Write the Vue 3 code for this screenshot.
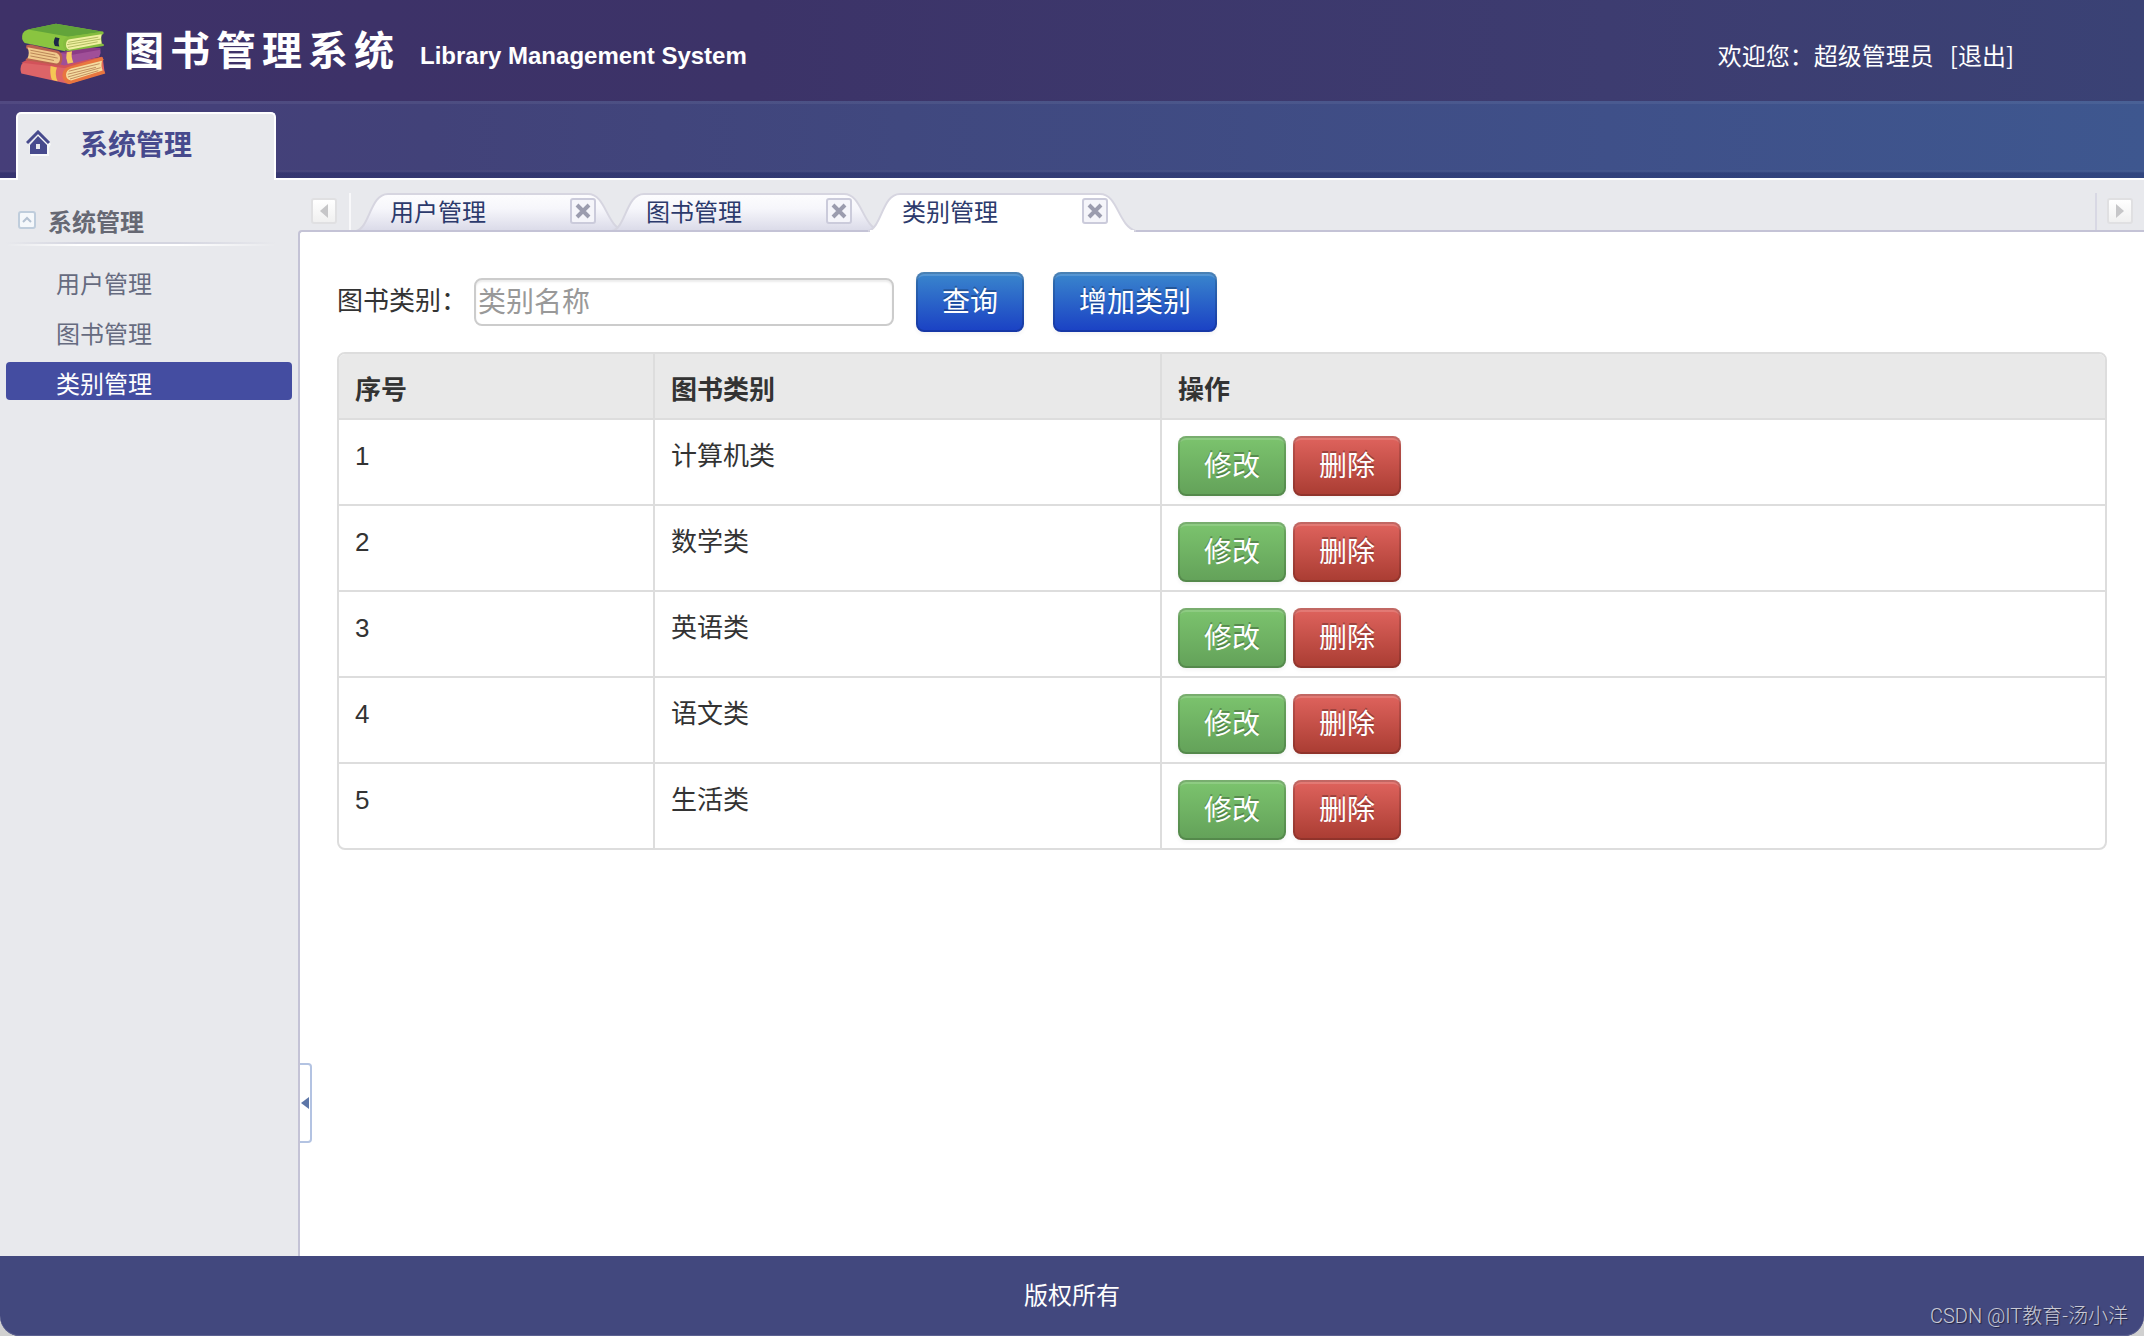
<script setup>
import { ref } from 'vue'

const keyword = ref('')
const menu = ['用户管理', '图书管理', '类别管理']
const tabs = ['用户管理', '图书管理', '类别管理']
const active = ref('类别管理')
const categories = ['计算机类', '数学类', '英语类', '语文类', '生活类']
</script>

<template>
  <div class="page">
    <header class="banner">
      <svg class="logo" viewBox="60 70 256 184" aria-hidden="true">
        <g stroke-linejoin="round" stroke-linecap="round">
          <path d="M78 184 L66 190 Q58 204 64 220 L206 251 L312 218 L306 172 L210 186 Z" fill="#dd6468" />
          <path d="M64 188 L80 180 L200 188 L304 170 L308 178 L206 202 Q190 206 150 198 Z" fill="#d2525a" />
          <path d="M205 200 Q187 206 186 226 Q188 246 206 252 L314 220 L311 213 L305 208 L305 186 L309 178 L304 171 Z" fill="#e8763f" />
          <path d="M212 205 L304 182 Q300 198 306 211 L212 241 Q197 238 197 223 Q198 209 212 205 Z" fill="#f5dca0" />
          <path d="M206 213 L296 191 M203 222 L285 202 M204 230 L299 203 M210 236 L292 212" fill="none" stroke="#a86a42" stroke-width="2" />
          <path d="M151 198 L170 202 Q162 222 172 243 L155 239 Q148 222 151 198 Z" fill="#f5c654" />
          <path d="M180 158 L299 145 Q302 158 296 170 L192 196 L176 192 Z" fill="#a04f98" />
          <path d="M180 158 L240 142 L298 144 L299 149 L216 164 Z" fill="#8b3b86" />
          <path d="M199 157 L215 154 Q211 170 219 187 L202 191 Q195 174 199 157 Z" fill="#f5cb61" />
          <path d="M79 136 L92 134 L175 153 Q188 161 186 178 Q184 194 174 196 L76 180 L80 175 L87 173 L88 152 L78 144 Z" fill="#b8604e" />
          <path d="M82 142 L168 158 Q181 164 179 178 Q177 190 168 190 L82 175 Q90 158 82 142 Z" fill="#f0c98c" />
          <path d="M92 151 L164 165 M92 159 L171 174 M92 168 L160 181" fill="none" stroke="#a0653f" stroke-width="2" />
          <path d="M84 89 L167 72 L308 96 L309 101 L200 120 L195 154 L74 129 Q62 119 68 101 Q72 92 84 89 Z" fill="#8ac440" />
          <path d="M84 89 L167 72 L306 96 L206 111 Z" fill="#62a43a" />
          <path d="M206 110 L307 96 L308 102 L302 108 L303 130 L310 134 L309 138 L202 154 Q187 149 188 131 Q190 114 206 110 Z" fill="#86bd3f" />
          <path d="M208 118 L303 103 Q298 117 303 131 L207 149 Q196 146 197 133 Q198 120 208 118 Z" fill="#eff0a0" />
          <path d="M204 127 L292 112 M201 134 L298 118 M204 142 L290 126" fill="none" stroke="#93a345" stroke-width="2" />
          <path d="M165 112 L178 115 Q172 127 177 140 L164 138 Q157 125 165 112 Z" fill="#1d2748" />
        </g>
      </svg>
      <h1 class="title">图书管理系统</h1>
      <span class="subtitle">Library Management System</span>
      <p class="welcome">欢迎您：超级管理员<a class="logout" href="#logout">[退出]</a></p>
    </header>

    <nav class="topnav">
      <a class="topnav-item" href="#system">
        <svg class="home" viewBox="0 0 26 26" aria-hidden="true">
          <path d="M3 16 L13 4 L25 14 L23 18 V26 H5 Z" fill="#fff" opacity=".7" />
          <path d="M1 13 L12 2 L23 13" fill="none" stroke="#474a8d" stroke-width="3" />
          <path d="M12 6 L21 15 V24 H4 V15 Z" fill="#474a8d" />
          <rect x="10" y="14" width="4" height="5" fill="#e8e9ed" />
        </svg>
        系统管理
      </a>
    </nav>

    <div class="body">
      <aside class="sidebar">
        <h2 class="group">
          <button class="fold" type="button" aria-label="折叠">
            <svg viewBox="0 0 14 14"><path d="M3 9 L7 5 L11 9" fill="none" stroke="#b4c2d2" stroke-width="2" /></svg>
          </button>
          系统管理
        </h2>
        <ul class="menu">
          <li v-for="item in menu" :key="item">
            <a href="#menu" :class="{ on: item === active }" @click.prevent="active = item">{{ item }}</a>
          </li>
        </ul>
      </aside>

      <main class="main">
        <div class="tabbar">
          <button class="scroll scroll-left" type="button" aria-label="向左">
            <svg viewBox="0 0 8 14"><path d="M8 0 V14 L0 7 Z" fill="#c6c6c8" /></svg>
          </button>
          <div class="tabs">
            <div v-for="tab in tabs" :key="tab" class="tab" :class="{ current: tab === active }">
              <svg class="shape" viewBox="0 0 268 39" aria-hidden="true">
                <defs>
                  <linearGradient id="tabfill" x1="0" y1="0" x2="0" y2="1">
                    <stop offset="0" stop-color="#fdfdfe" />
                    <stop offset=".4" stop-color="#f6f6fb" />
                    <stop offset="1" stop-color="#dadae8" />
                  </linearGradient>
                </defs>
                <path
                  d="M0 38 C14 35 14 1 32 1 H232 C250 1 250 33 268 38"
                  :fill="tab === active ? '#fff' : 'url(#tabfill)'"
                  stroke="#d6d5e0"
                  stroke-width="2"
                />
                <path v-if="tab === active" d="M2 38 H266" stroke="#fff" stroke-width="2" />
                <path v-else d="M0 38 H268" stroke="#c4c3d6" stroke-width="2" />
              </svg>
              <a class="tab-text" href="#tab" @click.prevent="active = tab">{{ tab }}</a>
              <button class="close" type="button" aria-label="关闭">
                <svg viewBox="0 0 16 16"><path d="M2 2 L14 14 M14 2 L2 14" stroke="#9b9cae" stroke-width="4" /></svg>
              </button>
            </div>
          </div>
          <button class="scroll scroll-right" type="button" aria-label="向右">
            <svg viewBox="0 0 8 14"><path d="M0 0 V14 L8 7 Z" fill="#c6c6c8" /></svg>
          </button>
        </div>

        <section class="panel">
          <button class="splitter" type="button" aria-label="收起侧栏">
            <svg viewBox="0 0 8 12"><path d="M8 0 V12 L0 6 Z" fill="#5d76a8" /></svg>
          </button>
          <form class="search" @submit.prevent>
            <label for="category">图书类别：</label>
            <input id="category" v-model="keyword" type="text" placeholder="类别名称" />
            <button class="btn primary" type="submit">查询</button>
            <button class="btn primary" type="button">增加类别</button>
          </form>
          <table class="grid">
            <thead>
              <tr>
                <th class="col-no">序号</th>
                <th class="col-name">图书类别</th>
                <th>操作</th>
              </tr>
            </thead>
            <tbody>
              <tr v-for="(name, i) in categories" :key="name">
                <td>{{ i + 1 }}</td>
                <td>{{ name }}</td>
                <td>
                  <div class="actions">
                    <button class="btn success" type="button">修改</button>
                    <button class="btn danger" type="button">删除</button>
                  </div>
                </td>
              </tr>
            </tbody>
          </table>
        </section>
      </main>
    </div>

    <footer class="footer">
      <div class="footer-inner">
        版权所有
        <span class="mark">CSDN @IT教育-汤小洋</span>
      </div>
    </footer>
  </div>
</template>

<style>
body {
  background: #e8e9ed;
}
</style>

<style scoped>
.page {
  display: flex;
  flex-direction: column;
  min-height: 100vh;
  font-family: "Liberation Sans", "Noto Sans CJK SC", sans-serif;
  font-size: 24px;
  color: #333;
}

.page * {
  box-sizing: border-box;
}

a {
  color: inherit;
  text-decoration: none;
}

button {
  padding: 0;
  border: 0;
  font: inherit;
  cursor: pointer;
}

svg {
  display: block;
}

.banner {
  display: flex;
  align-items: center;
  height: 101px;
  padding: 0 130px 0 20px;
  background: linear-gradient(90deg, #3e3168, #3c3368 35%, #3d3c70 75%, #3a4275);
  color: #fff;
}

.logo {
  width: 86px;
  height: 62px;
  margin-top: 6px;
}

.title {
  margin: 0 0 0 18px;
  font-size: 40px;
  line-height: 60px;
  letter-spacing: 6px;
}

.subtitle {
  margin: 10px 0 0 20px;
  font-weight: bold;
}

.welcome {
  margin: 8px 0 0 auto;
  font-family: "Noto Sans CJK SC", sans-serif;
}

.logout {
  margin-left: 16px;
}

.topnav {
  display: flex;
  align-items: flex-end;
  height: 79px;
  padding-left: 16px;
  border-bottom: 2px solid #fff;
  background:
    linear-gradient(rgba(255, 255, 255, .06) 3px, transparent 3px, transparent 69px, rgba(255, 255, 255, .05) 70px, rgba(20, 30, 90, .3) 72px, rgba(20, 30, 90, .3)),
    linear-gradient(90deg, #463e79, #424279 20%, #40487f 42%, #3f5089 75%, #3e578f);
}

.topnav-item {
  display: flex;
  align-items: center;
  width: 260px;
  height: 68px;
  margin-bottom: -2px;
  padding: 0 0 8px 8px;
  border: 2px solid #fff;
  border-bottom: 0;
  border-radius: 5px 5px 0 0;
  background: #e8e9ed;
  color: #474a8d;
  font-size: 28px;
  font-weight: bold;
}

.home {
  width: 26px;
  height: 26px;
  margin-right: 28px;
}

.body {
  display: flex;
  flex: 1;
}

.sidebar {
  flex: none;
  width: 298px;
  padding: 20px 6px;
  background: #e8e9ed;
}

.group {
  display: flex;
  align-items: center;
  height: 46px;
  margin: 0;
  padding: 0 0 6px 12px;
  background:
    linear-gradient(90deg, transparent, #d4d5e0 25%, #d4d5e0 60%, transparent 270px) 0 42px / 100% 2px no-repeat,
    linear-gradient(90deg, transparent, #fff 25%, #fff 60%, transparent 270px) 0 44px / 100% 2px no-repeat;
  color: #666873;
  font-size: 24px;
}

.fold {
  width: 18px;
  height: 18px;
  margin-right: 12px;
  border: 2px solid #bfcddc;
  border-radius: 3px;
  background: #f5f8fb;
}

.menu {
  display: flex;
  flex-direction: column;
  gap: 12px;
  margin: 16px 0 0;
  padding: 0;
  list-style: none;
}

.menu a {
  display: block;
  height: 38px;
  padding: 4px 0 0 50px;
  border-radius: 4px;
  color: #666b80;
  line-height: 38px;
}

.menu a.on {
  background: #444da1;
  color: #fff;
}

.main {
  display: flex;
  flex: 1;
  flex-direction: column;
  min-width: 0;
}

.tabbar {
  display: flex;
  align-items: flex-end;
  height: 50px;
  padding: 0 0 0 13px;
  background: #e8e9ed;
}

.scroll {
  display: flex;
  align-items: center;
  justify-content: center;
  width: 26px;
  height: 26px;
  margin-bottom: 6px;
  border: 2px solid #e0e0e2;
  border-radius: 3px;
  background: linear-gradient(#fff, #f0f0f0);
}

.scroll svg {
  width: 8px;
  height: 14px;
}

.scroll-right {
  margin-right: 11px;
}

.tabs {
  display: flex;
  flex: 1;
  height: 37px;
  margin: 0 10px 0 12px;
  padding-left: 5px;
  border-left: 2px solid #f8f8fa;
  border-right: 2px solid #d8d8e4;
}

.tab {
  position: relative;
  display: flex;
  align-items: center;
  justify-content: space-between;
  width: 268px;
  height: 39px;
  margin-right: -12px;
  padding: 0 28px 3px 34px;
  z-index: 1;
}

.tab.current {
  z-index: 2;
}

.shape {
  position: absolute;
  inset: 0;
  width: 268px;
  height: 39px;
}

.tab-text {
  position: relative;
  padding-bottom: 2px;
  color: #2c3a6c;
}

.close {
  position: relative;
  display: flex;
  align-items: center;
  justify-content: center;
  width: 26px;
  height: 26px;
  border: 2px solid #cbcbdb;
  border-radius: 3px;
  background: #f5f5fa;
}

.close svg {
  width: 16px;
  height: 16px;
}

.panel {
  position: relative;
  flex: 1;
  padding: 40px 37px;
  border-top: 2px solid #c4c3d6;
  border-left: 2px solid #c4c3d6;
  border-top-left-radius: 4px;
  background: #fff;
}

.splitter {
  position: absolute;
  left: 0;
  bottom: 113px;
  display: flex;
  align-items: center;
  justify-content: center;
  width: 12px;
  height: 80px;
  border: 2px solid #b3c3e2;
  border-left: 0;
  border-radius: 0 4px 4px 0;
  background: #fff;
}

.splitter svg {
  width: 8px;
  height: 12px;
}

.search {
  display: flex;
  align-items: center;
  margin-bottom: 20px;
}

.search label {
  width: 137px;
  padding-bottom: 8px;
  font-size: 26px;
}

.search input {
  width: 420px;
  height: 48px;
  margin-right: 22px;
  padding: 2px 2px 0;
  border: 2px solid #ccc;
  border-radius: 8px;
  background: #fff;
  box-shadow: inset 0 2px 2px rgba(0, 0, 0, .08);
  color: #333;
  font: inherit;
  font-size: 28px;
}

.search input::placeholder {
  color: #999;
  opacity: 1;
}

.btn {
  height: 60px;
  padding: 2px 26px 0;
  border-radius: 8px;
  color: #fff;
  font-size: 28px;
  line-height: 40px;
  text-shadow: 0 -2px 0 rgba(0, 0, 0, .25);
  box-shadow: inset 0 0 0 2px rgba(0, 0, 0, .15), inset 0 4px 0 rgba(255, 255, 255, .15), 0 2px 4px rgba(0, 0, 0, .05);
}

.search .btn + .btn {
  margin-left: 29px;
}

.primary {
  background: linear-gradient(#3a87cd, #1a40c4);
}

.success {
  background: linear-gradient(#7cc46e, #63a159);
}

.danger {
  background: linear-gradient(#e0645e, #a93c32);
}

.grid {
  width: 100%;
  border: 2px solid #ddd;
  border-radius: 8px;
  border-spacing: 0;
  table-layout: fixed;
  font-size: 26px;
  line-height: 40px;
}

.grid th,
.grid td {
  padding: 16px 16px 8px;
  border-top: 2px solid #ddd;
  text-align: left;
  vertical-align: top;
}

.grid th {
  border-top: 0;
  background: #e9e9e9;
}

.grid th:first-child {
  border-top-left-radius: 6px;
}

.grid th:last-child {
  border-top-right-radius: 6px;
}

.grid th + th,
.grid td + td {
  border-left: 2px solid #ddd;
}

.grid .col-no {
  width: 314px;
}

.grid .col-name {
  width: 507px;
}

.actions {
  display: flex;
  gap: 7px;
}

.footer {
  background: #d0d0d0;
}

.footer-inner {
  position: relative;
  display: flex;
  align-items: center;
  justify-content: center;
  height: 80px;
  padding-bottom: 6px;
  border-radius: 0 0 20px 20px;
  background: #42487e;
  box-shadow: inset 0 -1px 0 #5c6191;
  color: #fff;
}

.mark {
  position: absolute;
  right: 16px;
  bottom: 7px;
  color: #c9cad6;
  font-family: Roboto, "Noto Sans CJK SC", sans-serif;
  font-size: 20px;
  font-weight: 300;
  text-shadow: 1px 1px 1px rgba(0, 0, 0, .5);
}
</style>
